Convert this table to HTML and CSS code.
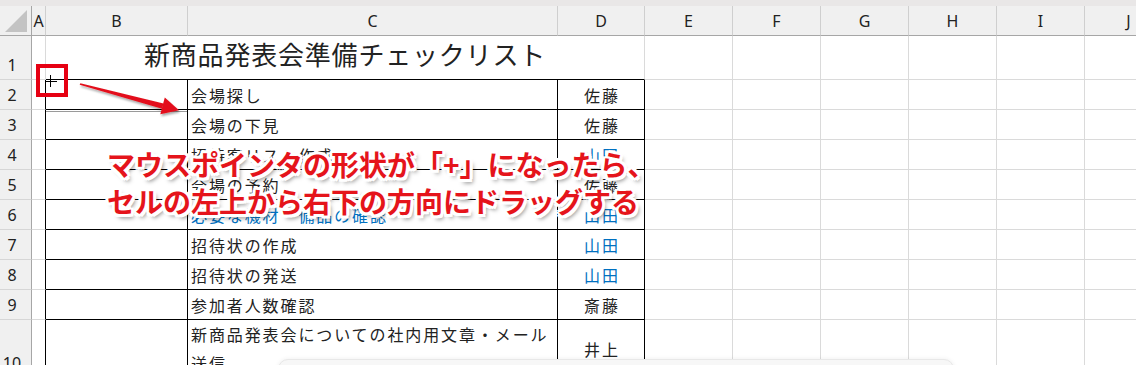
FILE: index.html
```html
<!DOCTYPE html>
<html lang="ja">
<head>
<meta charset="utf-8">
<title>新商品発表会準備チェックリスト</title>
<link rel="stylesheet" href="styles.css">
</head>
<body>
<div class="app">
  <div class="topbar"></div>
  <div class="sheet">
    <div class="corner"></div>
    <div class="ch">A</div><div class="ch">B</div><div class="ch">C</div><div class="ch">D</div><div class="ch">E</div><div class="ch">F</div><div class="ch">G</div><div class="ch">H</div><div class="ch">I</div><div class="ch">J</div>

    <div class="rh">1</div><div class="c"></div>
    <div class="c title">新商品発表会準備チェックリスト</div>
    <div class="c"></div><div class="c"></div><div class="c"></div><div class="c"></div><div class="c"></div><div class="c"></div>

    <div class="rh">2</div><div class="c aedge"></div><div class="c tb"></div>
    <div class="c tb task">会場探し</div><div class="c tb name">佐藤</div>
    <div class="c"></div><div class="c"></div><div class="c"></div><div class="c"></div><div class="c"></div><div class="c"></div>

    <div class="rh">3</div><div class="c aedge"></div><div class="c tb"></div>
    <div class="c tb task">会場の下見</div><div class="c tb name">佐藤</div>
    <div class="c"></div><div class="c"></div><div class="c"></div><div class="c"></div><div class="c"></div><div class="c"></div>

    <div class="rh">4</div><div class="c aedge"></div><div class="c tb"></div>
    <div class="c tb task">招待客リスト作成</div><div class="c tb name blue">山田</div>
    <div class="c"></div><div class="c"></div><div class="c"></div><div class="c"></div><div class="c"></div><div class="c"></div>

    <div class="rh">5</div><div class="c aedge"></div><div class="c tb"></div>
    <div class="c tb task">会場の予約</div><div class="c tb name">佐藤</div>
    <div class="c"></div><div class="c"></div><div class="c"></div><div class="c"></div><div class="c"></div><div class="c"></div>

    <div class="rh">6</div><div class="c aedge"></div><div class="c tb"></div>
    <div class="c tb task blue">必要な機材・備品の確認</div><div class="c tb name blue">山田</div>
    <div class="c"></div><div class="c"></div><div class="c"></div><div class="c"></div><div class="c"></div><div class="c"></div>

    <div class="rh">7</div><div class="c aedge"></div><div class="c tb"></div>
    <div class="c tb task">招待状の作成</div><div class="c tb name blue">山田</div>
    <div class="c"></div><div class="c"></div><div class="c"></div><div class="c"></div><div class="c"></div><div class="c"></div>

    <div class="rh">8</div><div class="c aedge"></div><div class="c tb"></div>
    <div class="c tb task">招待状の発送</div><div class="c tb name blue">山田</div>
    <div class="c"></div><div class="c"></div><div class="c"></div><div class="c"></div><div class="c"></div><div class="c"></div>

    <div class="rh">9</div><div class="c aedge"></div><div class="c tb"></div>
    <div class="c tb task">参加者人数確認</div><div class="c tb name">斎藤</div>
    <div class="c"></div><div class="c"></div><div class="c"></div><div class="c"></div><div class="c"></div><div class="c"></div>

    <div class="rh">10</div><div class="c aedge"></div><div class="c tb"></div>
    <div class="c tb task wrap">新商品発表会についての社内用文章・メール送信</div><div class="c tb name">井上</div>
    <div class="c"></div><div class="c"></div><div class="c"></div><div class="c"></div><div class="c"></div><div class="c"></div>
  </div>

  <svg class="marks" width="1136" height="365" viewBox="0 0 1136 365" aria-hidden="true">
    <defs>
      <filter id="sh" x="-20%" y="-50%" width="140%" height="200%">
        <feDropShadow dx="1" dy="2" stdDeviation="1.2" flood-color="#000" flood-opacity="0.35"/>
      </filter>
    </defs>
    <line x1="46" y1="111.5" x2="187" y2="111.5" stroke="#9a9a9a" stroke-width="1"/>
    <rect x="38" y="66" width="28" height="29" fill="none" stroke="#e60012" stroke-width="4"/>
    <path d="M50.5 75 V87 M45 81.5 H57" stroke="#000" stroke-width="1" fill="none"/>
    <g filter="url(#sh)" fill="#e3101a">
      <polygon points="80.3,83.2 163.5,103.5 162,108.8 79.7,84.8"/>
      <polygon points="179,110.3 164.8,97.6 160.3,114.3"/>
    </g>
  </svg>

  <div class="note">
    <div>マウスポインタの形状が「+」になったら、</div>
    <div>セルの左上から右下の方向にドラッグする</div>
  </div>

  <div class="popup"></div>
</div>
</body>
</html>
```

FILE: styles.css
```css
html, body {
  margin: 0;
  padding: 0;
  background: #fff;
  overflow: hidden;
}

body {
  font-family: "Noto Sans CJK JP", "Noto Sans", sans-serif;
  color: #222;
}

.app {
  position: relative;
  width: 1136px;
  height: 365px;
  overflow: hidden;
}

.topbar {
  height: 6px;
  background: #e9e7e7;
}

.sheet {
  display: grid;
  grid-template-columns: 32px 14px 142px 370px 87px repeat(6, 88px);
  grid-template-rows: 30px 44px repeat(8, 30px) 58px;
}

.sheet > div {
  box-sizing: border-box;
  border-right: 1px solid #dadada;
  border-bottom: 1px solid #dadada;
  display: flex;
  min-width: 0;
  overflow: hidden;
  white-space: nowrap;
}

.corner {
  position: relative;
  background: #f0f0f0;
  border-right-color: #a6a6a6 !important;
  border-bottom-color: #a6a6a6 !important;
}

.corner::after {
  content: "";
  position: absolute;
  left: 5px;
  top: 4px;
  width: 22px;
  height: 22px;
  background: #c3c3c3;
  clip-path: polygon(100% 0, 100% 100%, 0 100%);
}

.ch {
  background: #f0f0f0;
  border-right-color: #cfcfcf !important;
  border-bottom-color: #a6a6a6 !important;
  align-items: center;
  justify-content: center;
  font-family: "Noto Sans", sans-serif;
  font-size: 16px;
  color: #222;
}

.rh {
  background: #f0f0f0;
  border-right-color: #a6a6a6 !important;
  border-bottom-color: #d6d6d6 !important;
  align-items: flex-end;
  justify-content: center;
  padding: 0 7px 4px 0;
  font-family: "Noto Sans", sans-serif;
  font-size: 16px;
  line-height: 20px;
  color: #222;
}

.aedge {
  border-right-color: #000 !important;
}

.tb {
  border-right-color: #000 !important;
  border-bottom-color: #000 !important;
}

.title {
  grid-column: span 3;
  border-bottom-color: #000 !important;
  justify-content: center;
  align-items: center;
  padding-bottom: 8px;
  font-size: 26px;
  letter-spacing: 0.8px;
  color: #222;
}

.task {
  align-items: center;
  padding-left: 3px;
  font-size: 16px;
  letter-spacing: 1.9px;
  color: #222;
}

.task.wrap {
  align-items: flex-start;
  white-space: normal !important;
  line-height: 29px;
}

.name {
  justify-content: center;
  align-items: center;
  padding-left: 2px;
  font-size: 16px;
  letter-spacing: 1.9px;
  color: #222;
}

.blue {
  color: #0070c0;
}

.marks {
  position: absolute;
  left: 0;
  top: 0;
  pointer-events: none;
}

.note {
  position: absolute;
  left: 107px;
  top: 146px;
  font-family: "Noto Sans CJK JP", sans-serif;
  font-weight: 700;
  font-size: 28px;
  line-height: 37px;
  color: #e5141b;
  white-space: nowrap;
  text-shadow:
    2px 0 0 #fff, -2px 0 0 #fff, 0 2px 0 #fff, 0 -2px 0 #fff,
    1.5px 1.5px 0 #fff, -1.5px 1.5px 0 #fff, 1.5px -1.5px 0 #fff, -1.5px -1.5px 0 #fff,
    3px 0 0 #fff, -3px 0 0 #fff, 0 3px 0 #fff, 0 -3px 0 #fff,
    2.5px 2.5px 0 #fff, -2.5px 2.5px 0 #fff, 2.5px -2.5px 0 #fff, -2.5px -2.5px 0 #fff,
    3px 4px 4px rgba(0, 0, 0, 0.5);
}

.popup {
  position: absolute;
  left: 278px;
  top: 359px;
  width: 676px;
  height: 40px;
  box-sizing: border-box;
  background: #f7f7f7;
  border: 1px solid #e8e8e8;
  border-radius: 10px;
  box-shadow: 0 0 5px rgba(0, 0, 0, 0.07);
}
```
